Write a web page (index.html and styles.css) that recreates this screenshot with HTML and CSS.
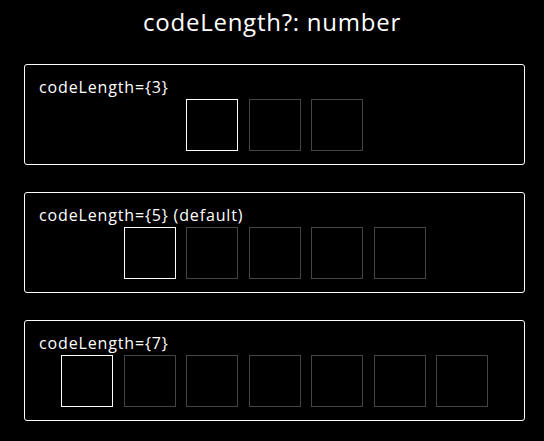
FILE: index.html
```html
<!DOCTYPE html>
<html>
<head>
<meta charset="utf-8">
<link rel="stylesheet" href="styles.css">
</head>
<body>
<h1 class="title">codeLength?: number</h1>
<div class="demo">
  <div class="label">codeLength={3}</div>
  <div class="cells">
    <div class="cell active"></div><div class="cell"></div><div class="cell"></div>
  </div>
</div>
<div class="demo">
  <div class="label">codeLength={5} (default)</div>
  <div class="cells">
    <div class="cell active"></div><div class="cell"></div><div class="cell"></div><div class="cell"></div><div class="cell"></div>
  </div>
</div>
<div class="demo">
  <div class="label">codeLength={7}</div>
  <div class="cells">
    <div class="cell active"></div><div class="cell"></div><div class="cell"></div><div class="cell"></div><div class="cell"></div><div class="cell"></div><div class="cell"></div>
  </div>
</div>
</body>
</html>
```
FILE: styles.css
```css
html, body {
  margin: 0;
  background: #000;
  color: #fff;
  font-family: "Open Sans", "Noto Sans", sans-serif;
}
.title {
  margin: 0;
  height: 64px;
  padding-top: 5px;
  box-sizing: border-box;
  text-align: center;
  font-size: 24px;
  font-weight: 400;
  line-height: 34px;
  letter-spacing: 0.75px;
}
.demo {
  width: 501px;
  height: 101px;
  box-sizing: border-box;
  border: 1px solid #fff;
  border-radius: 3px;
  padding: 11px 14px 0;
  margin: 0 0 27px 24px;
}
.label {
  font-size: 16px;
  line-height: 22px;
  height: 22px;
  letter-spacing: 0.85px;
}
.cells {
  margin-top: 1px;
  display: flex;
  justify-content: center;
  gap: 10.5px;
}
.cell {
  width: 52px;
  height: 52px;
  box-sizing: border-box;
  border: 1px solid #444;
}
.cell.active {
  border-color: #fff;
}
```
